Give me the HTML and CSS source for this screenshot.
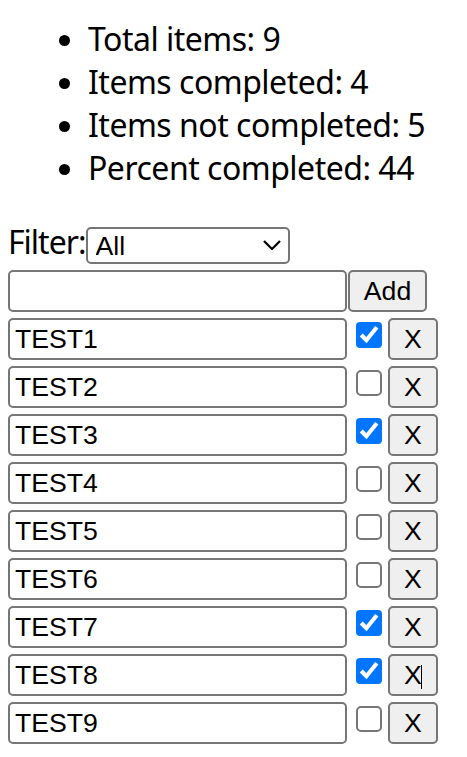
FILE: index.html
```html
<!DOCTYPE html>
<html lang="en">
<head>
<meta charset="utf-8">
<title>Todo list</title>
<link rel="stylesheet" href="styles.css">
</head>
<body>
<div class="app">
  <ul class="stats">
    <li>Total items: 9</li>
    <li>Items completed: 4</li>
    <li>Items not completed: 5</li>
    <li>Percent completed: 44</li>
  </ul>

  <div class="filter">
    <label for="filter" class="filter-label">Filter:</label>
    <div class="select-wrap">
      <select id="filter" class="select">
        <option>All</option>
        <option>Completed</option>
        <option>Not completed</option>
      </select>
      <svg class="chevron" viewBox="0 0 18 10" aria-hidden="true"><path d="M1 1 L9 9 L17 1" fill="none" stroke="#000" stroke-width="2.2"/></svg>
    </div>
  </div>

  <div class="row">
    <input class="text-input" type="text" value="">
    <button class="btn btn-add">Add</button>
  </div>

  <div class="row"><input class="text-input" type="text" value="TEST1"><input class="check" type="checkbox" checked><button class="btn btn-del">X</button></div>
  <div class="row"><input class="text-input" type="text" value="TEST2"><input class="check" type="checkbox"><button class="btn btn-del">X</button></div>
  <div class="row"><input class="text-input" type="text" value="TEST3"><input class="check" type="checkbox" checked><button class="btn btn-del">X</button></div>
  <div class="row"><input class="text-input" type="text" value="TEST4"><input class="check" type="checkbox"><button class="btn btn-del">X</button></div>
  <div class="row"><input class="text-input" type="text" value="TEST5"><input class="check" type="checkbox"><button class="btn btn-del">X</button></div>
  <div class="row"><input class="text-input" type="text" value="TEST6"><input class="check" type="checkbox"><button class="btn btn-del">X</button></div>
  <div class="row"><input class="text-input" type="text" value="TEST7"><input class="check" type="checkbox" checked><button class="btn btn-del">X</button></div>
  <div class="row"><input class="text-input" type="text" value="TEST8"><input class="check" type="checkbox" checked><button class="btn btn-del">X<span class="cursor" aria-hidden="true"></span></button></div>
  <div class="row"><input class="text-input" type="text" value="TEST9"><input class="check" type="checkbox"><button class="btn btn-del">X</button></div>
</div>
</body>
</html>
```

FILE: styles.css
```css
* {
  box-sizing: border-box;
}

body {
  margin: 0;
  background: #ffffff;
  color: #000000;
  font-family: "Noto Sans", "Open Sans", sans-serif;
}

.app {
  padding: 0 8px;
}

.stats {
  margin: 17px 0 0;
  padding-left: 80px;
  font-size: 32px;
  line-height: 43px;
  letter-spacing: -0.5px;
}

.filter {
  display: flex;
  align-items: flex-start;
  margin-top: 31px;
}

.filter-label {
  font-size: 32px;
  line-height: 43px;
  letter-spacing: -1px;
}

.select-wrap {
  position: relative;
  margin-top: 7px;
}

.select {
  appearance: none;
  -webkit-appearance: none;
  display: block;
  width: 204px;
  height: 37px;
  margin: 0;
  padding: 0 0 0 8px;
  border: 2px solid #767676;
  border-radius: 5px;
  background: #ffffff;
  color: #000000;
  font-family: "Liberation Sans", Arial, sans-serif;
  font-size: 26.67px;
}

.chevron {
  position: absolute;
  right: 9px;
  top: 13px;
  width: 18px;
  height: 10px;
  pointer-events: none;
}

.row {
  display: flex;
  align-items: flex-start;
  margin-top: 6px;
}

.text-input {
  width: 339px;
  height: 42px;
  margin: 0;
  padding: 0 5px;
  border: 2px solid #767676;
  border-radius: 5px;
  background: #ffffff;
  color: #000000;
  font-family: "Liberation Sans", Arial, sans-serif;
  font-size: 26.67px;
}

.btn {
  height: 42px;
  margin: 0;
  padding: 0;
  border: 2px solid #767676;
  border-radius: 5px;
  background: #efefef;
  color: #000000;
  font-family: "Liberation Sans", Arial, sans-serif;
  font-size: 26.67px;
}

.btn-add {
  width: 79px;
  margin-left: 1px;
}

.check {
  zoom: 2;
  width: 13px;
  height: 13px;
  margin: 2px 0 0 4.5px;
}

.btn-del {
  position: relative;
  width: 50px;
  margin-left: 6px;
}

.cursor {
  position: absolute;
  left: 31px;
  top: 9px;
  width: 1px;
  height: 24px;
  background: #000000;
}
```
